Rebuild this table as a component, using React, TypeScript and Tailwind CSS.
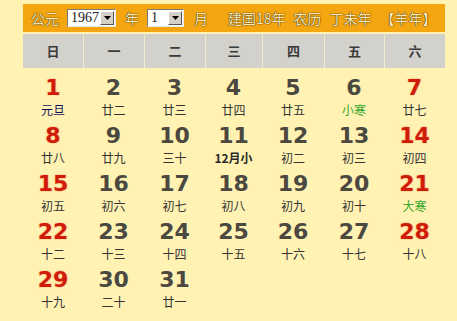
import React from "react";

type Day = { n: number; lunar: string; red?: boolean; kind?: "holiday" | "term" | "month" };

const weekNames = ["日", "一", "二", "三", "四", "五", "六"];

const lunar = [
  "元旦", "廿二", "廿三", "廿四", "廿五", "小寒", "廿七",
  "廿八", "廿九", "三十", "12月小", "初二", "初三", "初四",
  "初五", "初六", "初七", "初八", "初九", "初十", "大寒",
  "十二", "十三", "十四", "十五", "十六", "十七", "十八",
  "十九", "二十", "廿一",
];

const days: Day[] = lunar.map((l, i) => {
  const col = i % 7;
  let kind: Day["kind"];
  if (l === "元旦") kind = "holiday";
  else if (l === "小寒" || l === "大寒") kind = "term";
  else if (l === "12月小") kind = "month";
  return { n: i + 1, lunar: l, red: col === 0 || col === 6, kind };
});

const rows: Day[][] = [];
for (let i = 0; i < days.length; i += 7) rows.push(days.slice(i, i + 7));

const cjk = "font-['Noto_Sans_CJK_SC','Noto_Sans',sans-serif]";

function FakeSelect({ value, width }: { value: string; width: string }) {
  return (
    <div
      className={`flex h-[18px] items-center border border-t-[#7a7a7a] border-l-[#7a7a7a] border-b-[#e8e8e8] border-r-[#e8e8e8] bg-white ${width}`}
    >
      <span className="flex-1 pl-[3px] font-['Liberation_Serif',serif] text-[14px] leading-[16px] text-[#222]">
        {value}
      </span>
      <span className="mr-px flex h-[14px] w-[14px] items-center justify-center border border-t-white border-l-white border-b-[#555] border-r-[#555] bg-[#d4d0c8]">
        <svg width="7" height="4" viewBox="0 0 7 4">
          <path d="M0 0h7L3.5 4z" fill="#000" />
        </svg>
      </span>
    </div>
  );
}

export default function App() {
  const cols = "grid grid-cols-[60px_61px_61px_57px_62px_60px_61px]";
  const headText =
    "text-[14px] leading-[16px] text-[#f7e9bd] [text-shadow:0_0_1px_#5a3c00,0_0_1px_#5a3c00,0_0_1px_#5a3c00]";

  return (
    <div className="h-[321px] w-[457px] overflow-hidden bg-[#fff2b3] pt-[4px]">
      <div className="ml-[23px] w-[422px]">
        {/* title bar */}
        <div className={`flex h-[28px] items-center bg-[#f3a60f] pl-[8px] ${cjk}`}>
          <span className={headText}>公元</span>
          <div className="ml-[8px]">
            <FakeSelect value="1967" width="w-[49px]" />
          </div>
          <span className={`ml-[9px] ${headText}`}>年</span>
          <div className="ml-[8px]">
            <FakeSelect value="1" width="w-[37px]" />
          </div>
          <span className={`ml-[10px] ${headText}`}>月</span>
          <span className={`ml-[20px] ${headText}`}>建国18年</span>
          <span className={`ml-[8px] ${headText}`}>农历</span>
          <span className={`ml-[8px] ${headText}`}>丁未年</span>
          <span className={`ml-[9px] ${headText}`}>【羊年】</span>
        </div>

        {/* week header */}
        <div className={`mt-[2px] h-[34px] ${cols} ${cjk}`}>
          {weekNames.map((w, i) => (
            <div
              key={w}
              className={`flex items-center justify-center bg-[#d3d1cb] text-[13px] font-bold text-[#3a3a3a] ${
                i > 0 ? "border-l border-[#f3ecc8]" : ""
              }`}
            >
              {w}
            </div>
          ))}
        </div>

        {/* days */}
        <div className="pt-[8px]">
          {rows.map((r, ri) => (
            <div key={ri} className={`h-[48px] ${cols}`}>
              {r.map((d) => (
                <div key={d.n} className="flex flex-col items-center">
                  <span
                    className={`font-['DejaVu_Sans',sans-serif] text-[22px] font-bold leading-[24px] ${
                      d.red
                        ? "text-[#cf1c08] [text-shadow:0_0_2px_rgba(255,90,60,0.55)]"
                        : "text-[#4b4840]"
                    }`}
                  >
                    {d.n}
                  </span>
                  <span
                    className={`mt-[3px] text-[12px] leading-[14px] ${cjk} ${
                      d.kind === "holiday"
                        ? "text-[#101060]"
                        : d.kind === "term"
                        ? "text-[#3aa830]"
                        : d.kind === "month"
                        ? "font-bold text-[#2a2a2a]"
                        : "text-[#333]"
                    }`}
                  >
                    {d.lunar}
                  </span>
                </div>
              ))}
            </div>
          ))}
        </div>
      </div>
    </div>
  );
}
